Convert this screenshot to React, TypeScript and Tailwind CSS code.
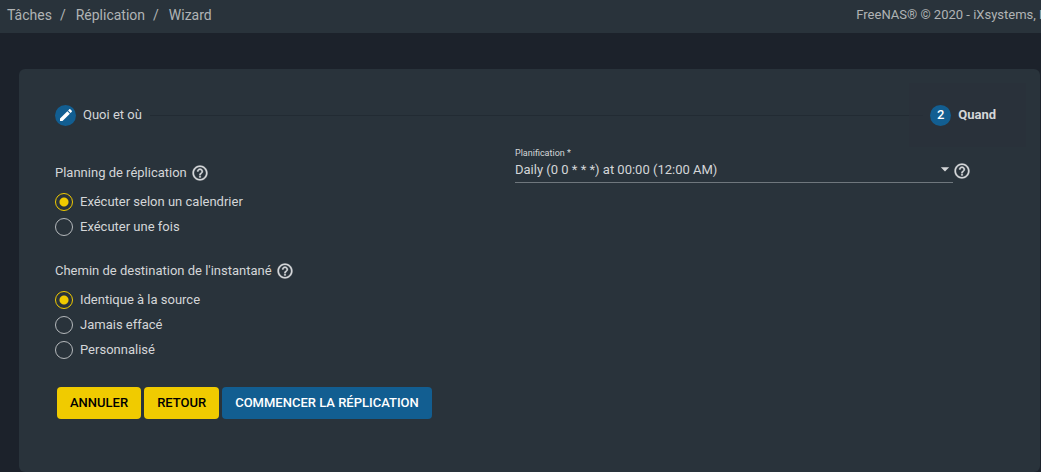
import React, { useState } from 'react';
import { MdArrowDropDown } from 'react-icons/md';

interface RadioOption {
  id: string;
  label: string;
}

interface RadioGroupProps {
  name: string;
  legend: string;
  options: RadioOption[];
  value: string;
  onChange: (value: string) => void;
}

const breadcrumbs = ['Tâches', 'Réplication', 'Wizard'];

const scheduleOptions: RadioOption[] = [
  { id: 'cron', label: 'Exécuter selon un calendrier' },
  { id: 'once', label: 'Exécuter une fois' },
];

const lifetimeOptions: RadioOption[] = [
  { id: 'same', label: 'Identique à la source' },
  { id: 'never', label: 'Jamais effacé' },
  { id: 'custom', label: 'Personnalisé' },
];

const PencilIcon: React.FC = () => (
  <svg viewBox="0 0 24 24" className="size-4" fill="currentColor" aria-hidden="true">
    <path d="M3 17.25V21h3.75L17.81 9.94l-3.75-3.75L3 17.25zM20.71 7.04c.39-.39.39-1.02 0-1.41l-2.34-2.34c-.39-.39-1.02-.39-1.41 0l-1.83 1.83 3.75 3.75 1.83-1.83z" />
  </svg>
);

const HelpButton: React.FC = () => (
  <button type="button" aria-label="Aide" className="shrink-0 text-[#d4d6d8]">
    <svg viewBox="0 0 24 24" className="size-[18px]" fill="currentColor" stroke="currentColor" strokeWidth="0.4" aria-hidden="true">
      <path d="M11 18h2v-2h-2v2zm1-16C6.48 2 2 6.48 2 12s4.48 10 10 10 10-4.48 10-10S17.52 2 12 2zm0 18c-4.41 0-8-3.59-8-8s3.59-8 8-8 8 3.59 8 8-3.59 8-8 8zm0-14c-2.21 0-4 1.79-4 4h2c0-1.1.9-2 2-2s2 .9 2 2c0 2-3 1.75-3 5h2c0-2.25 3-2.5 3-5 0-2.21-1.79-4-4-4z" />
    </svg>
  </button>
);

const RadioGroup: React.FC<RadioGroupProps> = ({ name, legend, options, value, onChange }) => (
  <fieldset>
    <legend className="mb-1 flex h-6 items-center gap-1">
      {legend}
      <HelpButton />
    </legend>
    {options.map((option) => (
      <label key={option.id} className="flex h-[25px] w-fit items-center gap-[7px]">
        <input
          type="radio"
          name={name}
          checked={value === option.id}
          onChange={() => onChange(option.id)}
          className="size-[18px] shrink-0 appearance-none rounded-full border border-[#b5b9bc] checked:border-[#f0cb00] checked:bg-[radial-gradient(circle,#f0cb00_4px,transparent_5px)]"
        />
        {option.label}
      </label>
    ))}
  </fieldset>
);

export default function App() {
  const [schedule, setSchedule] = useState('cron');
  const [lifetime, setLifetime] = useState('same');

  return (
    <div className="min-h-screen overflow-x-hidden bg-[#1c222b] font-['Roboto',sans-serif] text-[13px] text-[#d4d6d8]">
      {/* Top bar */}
      <header className="flex h-[33px] items-center justify-between overflow-hidden bg-[#29333b] pl-[7px] text-[#b0b3b5]">
        <nav className="flex pb-[3px] text-sm">
          {breadcrumbs.map((crumb, index) => (
            <React.Fragment key={crumb}>
              {index > 0 && <span className="pr-2.5 pl-2">/</span>}
              <a href="#">{crumb}</a>
            </React.Fragment>
          ))}
        </nav>
        <p className="-mr-[19px] shrink-0 pb-[3px] whitespace-nowrap">FreeNAS® © 2020 - iXsystems, Inc.</p>
      </header>

      <main className="mt-9 mr-px ml-[19px] rounded-md bg-[#29333b] px-3.5 pt-3.5 pb-[53px]">
        {/* Stepper */}
        <div className="flex h-16 items-center">
          <button type="button" className="flex h-full items-center gap-[7px] pr-2 pl-[22px]">
            <span className="flex size-[21px] items-center justify-center rounded-full bg-[#125e91] text-white">
              <PencilIcon />
            </span>
            Quoi et où
          </button>
          <div className="-mr-3.5 flex-1 border-t border-[#222b33]" />
          <button type="button" className="flex h-full items-center gap-[7px] bg-[#2a303a]/60 pr-[30px] pl-[21px] font-bold">
            <span className="flex size-[21px] items-center justify-center rounded-full bg-[#125e91] font-medium text-white">
              2
            </span>
            Quand
          </button>
        </div>

        <form className="pt-3.5 pr-[51px] pl-[22px]" onSubmit={(e) => e.preventDefault()}>
          <div className="grid grid-cols-2">
            <div className="flex flex-col gap-5">
              <RadioGroup name="schedule" legend="Planning de réplication" options={scheduleOptions} value={schedule} onChange={setSchedule} />
              <RadioGroup name="lifetime" legend="Chemin de destination de l'instantané" options={lifetimeOptions} value={lifetime} onChange={setLifetime} />
            </div>

            <div className="-mt-3.5 flex items-start">
              <div className="flex-1">
                <label htmlFor="schedule-preset" className="block h-3 text-[9px] leading-3">Planification *</label>
                <div className="relative">
                  <select id="schedule-preset" className="block h-6 w-full appearance-none border-b border-[#6f777d] bg-transparent pb-0.5">
                    <option>Daily (0 0 * * *) at 00:00 (12:00 AM)</option>
                  </select>
                  <MdArrowDropDown size={20} className="pointer-events-none absolute top-0 -right-0.5" />
                </div>
              </div>
              <div className="w-[22px] pt-[15px]">
                <HelpButton />
              </div>
            </div>
          </div>

          <div className="mt-[25px] flex gap-[3px] pl-0.5 font-medium">
            <button type="button" className="h-8 rounded bg-[#f0cb00] px-[13px] text-black">ANNULER</button>
            <button type="button" className="h-8 rounded bg-[#f0cb00] px-[13px] text-black">RETOUR</button>
            <button type="submit" className="h-8 rounded bg-[#125e91] px-[13px] text-white">COMMENCER LA RÉPLICATION</button>
          </div>
        </form>
      </main>
    </div>
  );
}
